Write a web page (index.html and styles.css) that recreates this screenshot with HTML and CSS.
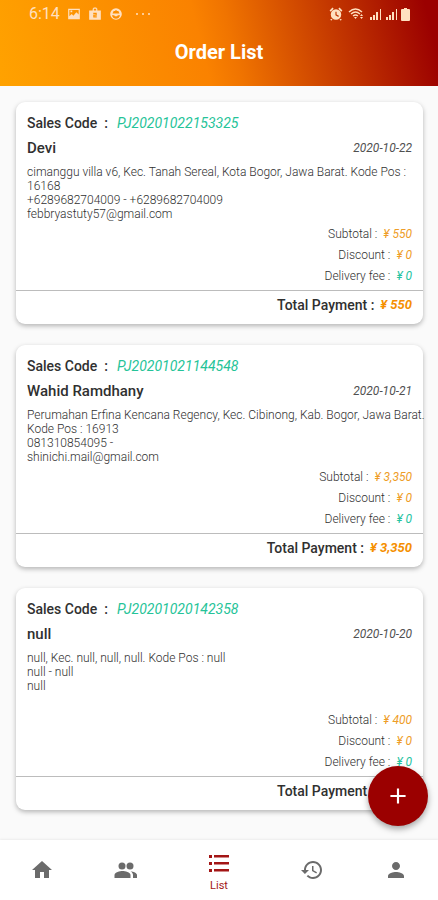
FILE: index.html
```html
<!DOCTYPE html>
<html lang="en">
<head>
<meta charset="utf-8">
<meta name="viewport" content="width=device-width, initial-scale=1">
<title>Order List</title>
<link rel="stylesheet" href="styles.css">
</head>
<body>
<div class="app">
  <header class="header">
    <div class="status">
      <div class="status-group">
        <span class="clock">6:14</span>
        <svg class="status-icon" viewBox="0 0 24 24"><path fill-rule="evenodd" d="M2 3h20v18H2zM4 5v11l4-4 3 3 5-6 4 4V5zM6 6h3v3H6z"/></svg>
        <svg class="status-icon" viewBox="0 0 24 24"><path fill-rule="evenodd" d="M2 6h6V3l2-2h4l2 2v3h6v16H2zM10 6h4V3h-4zM9 10v2h4v1H9v5h6v-2h-4v-1h4v-5z"/></svg>
        <svg class="status-icon" viewBox="0 0 24 24"><path fill-rule="evenodd" d="M12 2a10 10 0 1 0 0 20 10 10 0 0 0 0-20zM6 11l2-4h2l2-2 2 2h2l2 4zM5 14h4l1 2h4l1-2h4c-1 4-4 6-7 6s-6-2-7-6z"/></svg>
        <svg class="dots" viewBox="0 0 16 4"><circle cx="2" cy="2" r="1"/><circle cx="8" cy="2" r="1"/><circle cx="14" cy="2" r="1"/></svg>
      </div>
      <div class="status-group status-right">
        <svg class="status-icon" viewBox="0 0 24 24"><path fill-rule="evenodd" d="M12 4a9 9 0 1 0 0 18 9 9 0 0 0 0-18zM11 8h2v5l4 2-1 2-5-3zM1 6l5-5 2 2-5 5zM23 6l-5-5-2 2 5 5zM4 20l2 2-2 1-2-1zM20 20l-2 2 2 1 2-1z"/></svg>
        <svg class="wifi" viewBox="0 0 18 14"><g fill="none" stroke="currentColor" stroke-width="1.4"><path d="M1 5q6.500-6 13 0M3 7q4.500-4 9 0M5 9q2.500-2 5 0"/></g><path d="M6 10h3l-1.500 2zM12 9l1.500-2 1.500 2zM12 10h3l-1.500 2z"/></svg>
        <svg class="signal" viewBox="0 0 13 12"><path d="M1 9h2v3H1zM4 7h2v5H4zM7 4h2v8H7zM11 1h1v11h-1z"/></svg>
        <svg class="signal" viewBox="0 0 13 12"><path d="M1 9h2v3H1zM4 7h2v5H4zM7 4h2v8H7zM11 1h1v11h-1z"/></svg>
        <svg class="battery" viewBox="0 0 9 13"><path d="M3 0h3v1h2q1 0 1 1v10q0 1-1 1H1q-1 0-1-1V2q0-1 1-1h2z"/></svg>
      </div>
    </div>
    <h1 class="title">Order List</h1>
  </header>

  <main class="orders">
    <article class="card">
      <div class="code-row"><span class="code-label">Sales Code&nbsp; :</span><span class="code">PJ20201022153325</span></div>
      <div class="name-row"><h2 class="name">Devi</h2><time class="date">2020-10-22</time></div>
      <p class="address">cimanggu villa v6, Kec. Tanah Sereal, Kota Bogor, Jawa Barat. Kode Pos : 16168<br>+6289682704009 - +6289682704009<br>febbryastuty57@gmail.com</p>
      <dl class="costs">
        <div class="cost"><dt>Subtotal :</dt><dd>¥ 550</dd></div>
        <div class="cost"><dt>Discount :</dt><dd>¥ 0</dd></div>
        <div class="cost fee"><dt>Delivery fee :</dt><dd>¥ 0</dd></div>
      </dl>
      <div class="total"><span class="total-label">Total Payment :</span><span class="total-value">¥ 550</span></div>
    </article>

    <article class="card">
      <div class="code-row"><span class="code-label">Sales Code&nbsp; :</span><span class="code">PJ20201021144548</span></div>
      <div class="name-row"><h2 class="name">Wahid Ramdhany</h2><time class="date">2020-10-21</time></div>
      <p class="address">Perumahan Erfina Kencana Regency, Kec. Cibinong, Kab. Bogor, Jawa Barat. Kode Pos : 16913<br>081310854095 -<br>shinichi.mail@gmail.com</p>
      <dl class="costs">
        <div class="cost"><dt>Subtotal :</dt><dd>¥ 3,350</dd></div>
        <div class="cost"><dt>Discount :</dt><dd>¥ 0</dd></div>
        <div class="cost fee"><dt>Delivery fee :</dt><dd>¥ 0</dd></div>
      </dl>
      <div class="total"><span class="total-label">Total Payment :</span><span class="total-value">¥ 3,350</span></div>
    </article>

    <article class="card">
      <div class="code-row"><span class="code-label">Sales Code&nbsp; :</span><span class="code">PJ20201020142358</span></div>
      <div class="name-row"><h2 class="name">null</h2><time class="date">2020-10-20</time></div>
      <p class="address">null, Kec. null, null, null. Kode Pos : null<br>null - null<br>null</p>
      <dl class="costs">
        <div class="cost"><dt>Subtotal :</dt><dd>¥ 400</dd></div>
        <div class="cost"><dt>Discount :</dt><dd>¥ 0</dd></div>
        <div class="cost fee"><dt>Delivery fee :</dt><dd>¥ 0</dd></div>
      </dl>
      <div class="total"><span class="total-label">Total Payment :</span><span class="total-value">¥ 400</span></div>
    </article>
  </main>

  <div class="bottom">
    <button class="fab" type="button" aria-label="Add order"><svg viewBox="0 0 24 24"><path d="M19 13h-6v6h-2v-6H5v-2h6V5h2v6h6z"/></svg></button>
    <nav class="nav">
      <a class="tab" href="#home" aria-label="Home"><svg viewBox="0 0 24 24"><path d="M10 20v-6h4v6h5v-8h3L12 3 2 12h3v8z"/></svg></a>
      <a class="tab" href="#people" aria-label="Customers"><svg viewBox="0 0 24 24"><path d="M16.670 13.130C18.040 14.060 19 15.320 19 17v3h4v-3c0-2.180-3.570-3.470-6.330-3.870z"/><circle cx="16" cy="8" r="3.500"/><circle cx="8" cy="8" r="3.500"/><path d="M8.500 13C6 13 .5 14.340.5 17v3h16v-3c0-2.660-5.500-4-8-4z"/></svg></a>
      <a class="tab active" href="#list" aria-current="page"><svg viewBox="0 0 24 24"><path d="M2 4h3v3H2zM7 4h15v2.500H7zM2 11h3v3H2zM7 11h15v2.500H7zM2 18h3v3H2zM7 18h15v2.500H7z"/></svg><span>List</span></a>
      <a class="tab" href="#history" aria-label="History"><svg viewBox="0 0 24 24"><path d="M13 3c-4.970 0-9 4.030-9 9H1l3.890 3.890.07.14L9 12H6c0-3.870 3.130-7 7-7s7 3.130 7 7-3.130 7-7 7c-1.930 0-3.680-.79-4.940-2.060l-1.420 1.420C8.270 19.990 10.510 21 13 21c4.970 0 9-4.030 9-9s-4.030-9-9-9zm-1 5v5l4.280 2.540.72-1.210-3.500-2.080V8H12z"/></svg></a>
      <a class="tab" href="#account" aria-label="Account"><svg viewBox="0 0 24 24"><path d="M12 12c2.210 0 4-1.790 4-4s-1.790-4-4-4-4 1.790-4 4 1.790 4 4 4zm0 2c-2.670 0-8 1.340-8 4v2h16v-2c0-2.660-5.330-4-8-4z"/></svg></a>
    </nav>
  </div>
</div>
</body>
</html>
```

FILE: styles.css
```css
* {
  box-sizing: border-box;
}

body {
  margin: 0;
  background: #fafafa;
  color: #303030;
  font-family: Roboto, "Liberation Sans", sans-serif;
}

h1,
h2,
p,
dl,
dd {
  margin: 0;
}

.app {
  display: flex;
  flex-direction: column;
  min-height: 100vh;
}

.header {
  padding-bottom: 20px;
  background: linear-gradient(76deg, #ffa200 0%, #fa8200 46%, #f07400 53%, #9b0000 97%);
  color: #fff;
}

.status {
  display: flex;
  justify-content: space-between;
  padding: 4px 28px 0 29px;
  color: #ffe0c0;
}

.status svg {
  display: block;
  fill: currentColor;
}

.status-group {
  display: flex;
  align-items: center;
  gap: 7px;
  height: 20px;
}

.status-right {
  gap: 3px;
}

.clock {
  font-size: 16px;
  line-height: 20px;
}

.status-icon {
  width: 14px;
  height: 14px;
}

.dots {
  width: 16px;
  height: 4px;
  margin-left: 5px;
}

.wifi {
  width: 18px;
  height: 14px;
  margin-left: 2px;
}

.signal {
  width: 13px;
  height: 12px;
}

.battery {
  width: 9px;
  height: 13px;
}

.title {
  margin-top: 15px;
  padding-bottom: 1px;
  font-size: 20px;
  font-weight: 700;
  line-height: 26px;
  text-align: center;
}

.orders {
  display: flex;
  flex: 1;
  flex-direction: column;
  gap: 21px;
  padding: 16px 15px 28px 16px;
}

.card {
  padding-top: 11px;
  border-radius: 9px;
  background: #fff;
  box-shadow: 0 2px 5px rgba(0, 0, 0, 0.28);
}

.code-row {
  display: flex;
  gap: 9px;
  padding: 0 11px;
  font-size: 14px;
  line-height: 20px;
}

.code-label {
  font-weight: 500;
}

.code {
  color: #25c398;
  font-style: italic;
}

.name-row {
  display: flex;
  align-items: center;
  justify-content: space-between;
  margin-top: 5px;
  padding: 0 11px;
  line-height: 20px;
}

.name {
  font-size: 15px;
  font-weight: 500;
}

.date {
  color: #505050;
  font-size: 12px;
  font-style: italic;
}

.address {
  min-height: 56px;
  margin: 7px -4px 0 0;
  padding-left: 11px;
  color: #303030;
  font-size: 12px;
  font-weight: 300;
  line-height: 14px;
}

.costs {
  padding: 3px 11px;
  color: #303030;
  font-size: 12px;
  font-weight: 300;
  line-height: 21px;
}

.cost {
  display: flex;
  justify-content: flex-end;
  gap: 6px;
}

.cost dd {
  color: #ee9d27;
  font-style: italic;
  font-weight: 400;
}

.cost.fee dd {
  color: #25c3a0;
}

.total {
  display: flex;
  justify-content: flex-end;
  gap: 6px;
  padding: 4px 11px 9px;
  border-top: 1px solid #bcbcbc;
  font-size: 13px;
  line-height: 20px;
}

.total-label {
  font-size: 14px;
  font-weight: 500;
}

.total-value {
  color: #f58f00;
  font-style: italic;
  font-weight: 700;
}

.bottom {
  position: sticky;
  bottom: 0;
}

.fab {
  position: absolute;
  right: 10px;
  bottom: 74px;
  display: grid;
  place-items: center;
  width: 60px;
  height: 60px;
  padding: 0;
  border: 0;
  border-radius: 50%;
  background: #9b0000;
  box-shadow: 0 3px 6px rgba(0, 0, 0, 0.35);
}

.fab svg {
  width: 26px;
  height: 26px;
  fill: #fff;
}

.nav {
  display: flex;
  height: 60px;
  background: #fff;
  box-shadow: 0 -1px 2px rgba(0, 0, 0, 0.06);
}

.tab {
  display: flex;
  flex: 5;
  flex-direction: column;
  align-items: center;
  justify-content: center;
  color: #6b6b6b;
  font-size: 11px;
  line-height: 14px;
  text-decoration: none;
}

.tab svg {
  width: 24px;
  height: 24px;
  fill: currentColor;
}

.tab.active {
  flex: 6;
  gap: 4px;
  padding-top: 4px;
  color: #a31515;
}
```
